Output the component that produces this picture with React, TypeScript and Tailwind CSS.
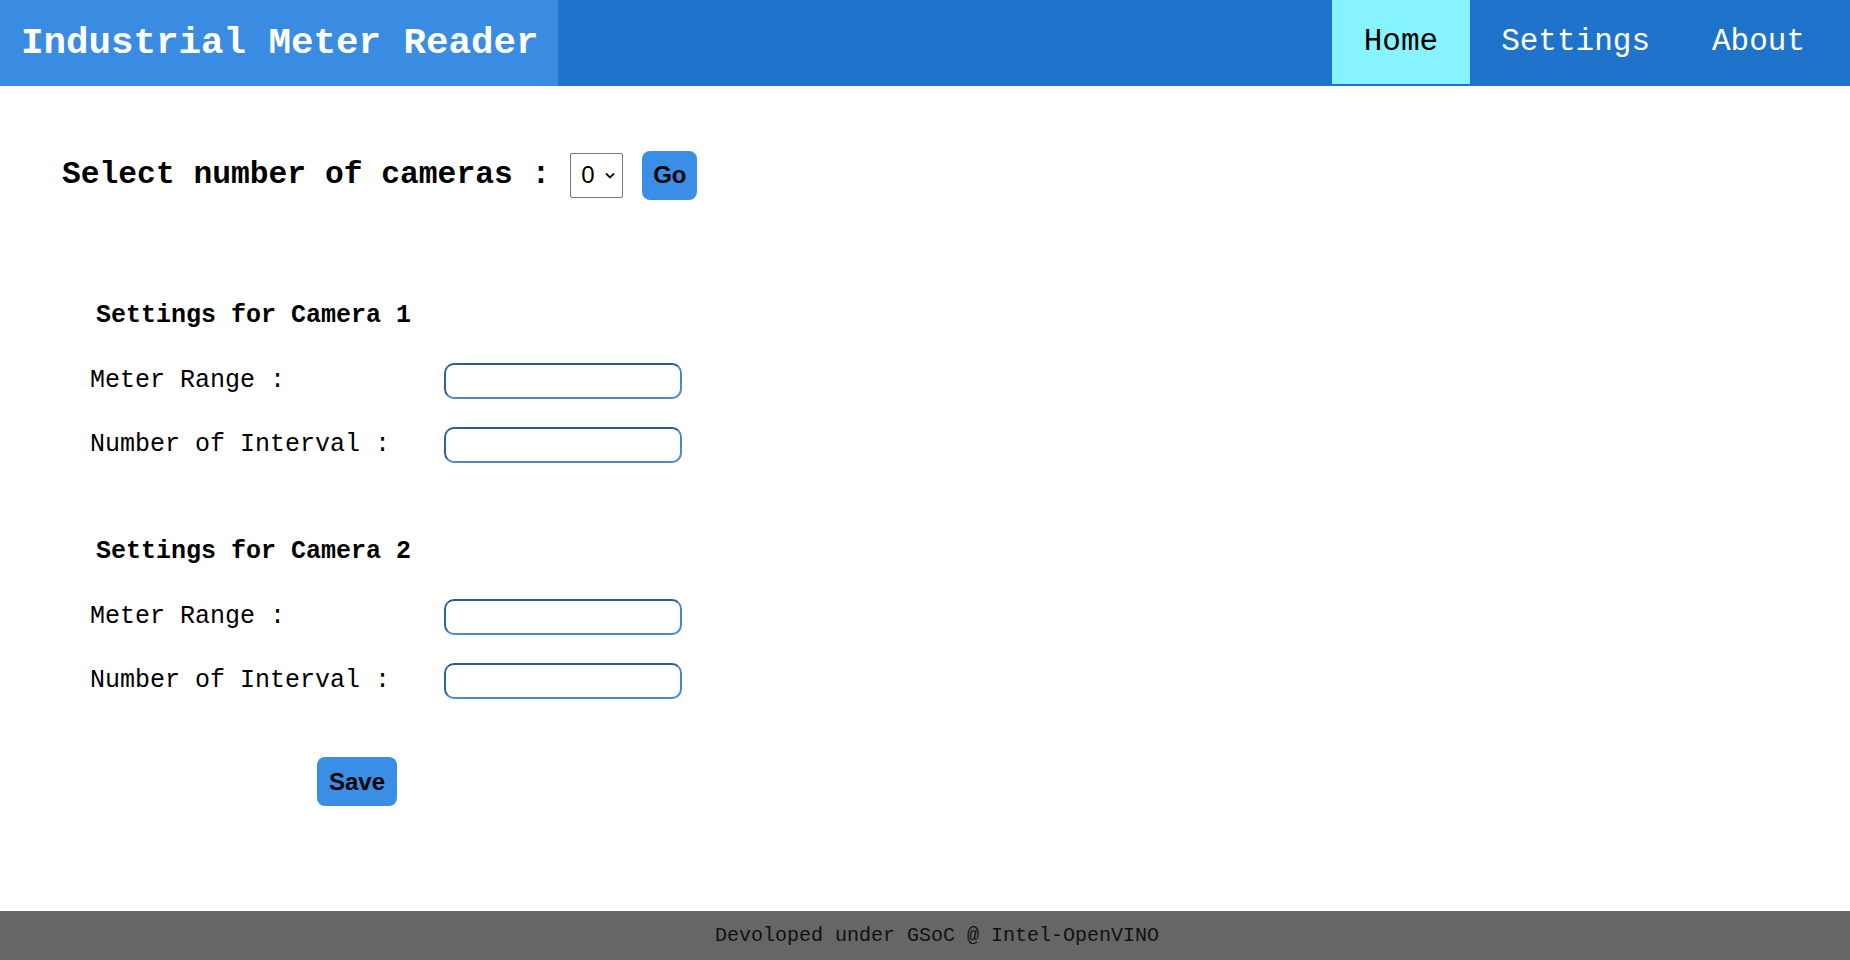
import React from "react";

const mono = { fontFamily: '"Liberation Mono", "DejaVu Sans Mono", monospace' };

function Field({ label }: { label: string }) {
  return (
    <div className="flex items-center h-[36px]">
      <div className="w-[354px] text-[25px] text-black" style={mono}>
        {label}
      </div>
      <input
        type="text"
        className="w-[238px] h-[36px] rounded-[10px] border-2 border-t-[#2c5a8c] border-l-[#2f6099] border-r-[#4a88cc] border-b-[#4a88cc] bg-white outline-none"
      />
    </div>
  );
}

function CameraSection({ n, top }: { n: number; top: string }) {
  return (
    <div className={top}>
      <div className="pl-[6px] pt-[2px] h-[30px] leading-[30px] text-[25px] font-bold text-black" style={mono}>
        Settings for Camera {n}
      </div>
      <div className="mt-[34px]">
        <Field label="Meter Range :" />
      </div>
      <div className="mt-[28px]">
        <Field label="Number of Interval :" />
      </div>
    </div>
  );
}

export default function App() {
  return (
    <div className="min-h-screen flex flex-col bg-white">
      <header className="flex h-[86px] bg-[#1f73ca]">
        <div
          className="w-[558px] h-full bg-[#3a8ce3] flex items-center pl-[21px] pt-[1px] text-white text-[37.5px] font-bold"
          style={mono}
        >
          Industrial Meter Reader
        </div>
        <nav className="ml-auto flex h-[84px] pr-[14px] text-[31px]" style={mono}>
          <a className="flex items-center px-[32px] bg-[#86f3fe] text-black">Home</a>
          <a className="flex items-center px-[31px] text-white">Settings</a>
          <a className="flex items-center px-[31px] text-white">About</a>
        </nav>
      </header>

      <main className="flex-1">
        <div className="mt-[64px] ml-[62px] flex items-center h-[50px]">
          <div className="text-[31.3px] font-bold text-black" style={mono}>
            Select number of cameras :
          </div>
          <div className="relative ml-[20px] w-[53px] h-[45px]">
            <select
              className="appearance-none w-full h-full border border-[#767676] rounded-[2px] bg-white pl-[10px] text-[24px] text-black outline-none"
              style={{ fontFamily: '"Liberation Sans", Arial, sans-serif' }}
              defaultValue="0"
            >
              <option value="0">0</option>
              <option value="1">1</option>
              <option value="2">2</option>
            </select>
            <svg
              className="pointer-events-none absolute right-[8px] top-[19px]"
              width="10"
              height="7"
              viewBox="0 0 10 7"
            >
              <path d="M1 1.5 L5 5.5 L9 1.5" fill="none" stroke="#111" strokeWidth="1.8" />
            </svg>
          </div>
          <button
            className="ml-[19px] w-[55px] h-[49px] rounded-[8px] bg-[#3a8ee6] text-black text-[24px] font-bold"
            style={{ fontFamily: '"Liberation Sans", Arial, sans-serif' }}
          >
            Go
          </button>
        </div>

        <div className="ml-[90px]">
          <CameraSection n={1} top="mt-[99px]" />
          <CameraSection n={2} top="mt-[72px]" />
          <button
            className="mt-[58px] ml-[227px] w-[80px] h-[49px] rounded-[8px] bg-[#3a8ee6] text-black text-[24px] font-bold"
            style={{ fontFamily: '"Liberation Sans", Arial, sans-serif' }}
          >
            Save
          </button>
        </div>
      </main>

      <footer
        className="h-[49px] bg-[#666666] flex items-center justify-center pl-[24px] text-[20px] text-[#111]"
        style={mono}
      >
        Devoloped under GSoC @ Intel-OpenVINO
      </footer>
    </div>
  );
}
